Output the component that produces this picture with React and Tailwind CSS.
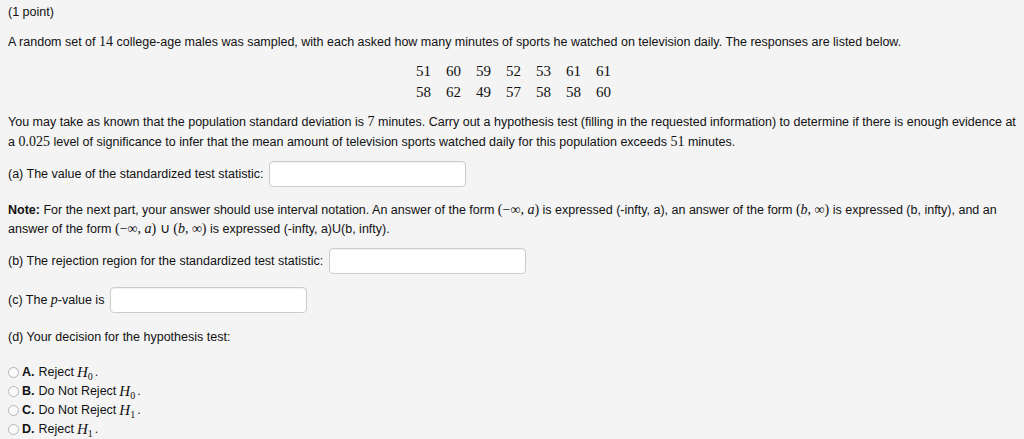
// App.jsx
const serif = "font-['Liberation_Serif',serif]";

function M({ children, italic }) {
  return (
    <span className={`${serif} text-[14px] leading-none ${italic ? "italic" : ""}`}>{children}</span>
  );
}

function AnswerBox() {
  return (
    <input
      type="text"
      className="ml-[6px] h-[26px] w-[197px] rounded-[4px] border border-[#cccccc] bg-white shadow-[inset_0_1px_1px_rgba(0,0,0,0.06)] outline-none"
    />
  );
}

function Radio({ letter, text, sub }) {
  return (
    <label className="flex h-[19px] items-center">
      <span className="mr-[3px] inline-block h-[11px] w-[11px] rounded-full border border-[#b5b5b5] bg-[#fafafa]" />
      <b className="font-bold">{letter}.</b>
      <span className="ml-[4px]">{text}</span>
      <span className="ml-[3px] leading-none">
        <span className={`${serif} text-[15px] italic`}>H</span>
        <sub className={`${serif} text-[10px]`}>{sub}</sub>
      </span>
      <span className="ml-[2px]">.</span>
    </label>
  );
}

const rows = [
  [51, 60, 59, 52, 53, 61, 61],
  [58, 62, 49, 57, 58, 58, 60],
];

export default function App() {
  return (
    <div className="min-h-[439px] bg-[#f4f4f4] px-[8px] pt-[3px] font-['Liberation_Sans',Arial,sans-serif] text-[12.5px] leading-[19px] text-[#111]">
      <p>(1 point)</p>

      <p className="mt-[11px]">
        A random set of <M>14</M> college-age males was sampled, with each asked how many minutes of sports he watched on television daily. The responses are listed below.
      </p>

      {/* data table */}
      <div className="mt-[9px] flex justify-center pl-[3px]">
        <div className="flex flex-col">
          {rows.map((r, i) => (
            <div key={i} className={`flex h-[21px] items-center gap-[15px] ${serif} text-[15px]`}>
              {r.map((v, j) => (
                <span key={j}>{v}</span>
              ))}
            </div>
          ))}
        </div>
      </div>

      <p className="mt-[10px] leading-[19.5px]">
        You may take as known that the population standard deviation is <M>7</M> minutes. Carry out a hypothesis test (filling in the requested information) to determine if there is enough evidence at a <M>0.025</M> level of significance to infer that the mean amount of television sports watched daily for this population exceeds <M>51</M> minutes.
      </p>

      <div className="mt-[9px] flex items-center">
        <span>(a) The value of the standardized test statistic:</span>
        <AnswerBox />
      </div>

      <p className="mt-[14px]">
        <b>Note:</b> For the next part, your answer should use interval notation. An answer of the form{" "}
        <M>(−∞, <i>a</i>)</M> is expressed (-infty, a), an answer of the form <M>(<i>b</i>, ∞)</M> is expressed (b, infty), and an answer of the form <M>(−∞, <i>a</i>) ∪ (<i>b</i>, ∞)</M> is expressed (-infty, a)U(b, infty).
      </p>

      <div className="mt-[9px] flex items-center">
        <span>(b) The rejection region for the standardized test statistic:</span>
        <AnswerBox />
      </div>

      <div className="mt-[13px] flex items-center">
        <span>
          (c) The <M italic>p</M>-value is
        </span>
        <AnswerBox />
      </div>

      <p className="mt-[15px]">(d) Your decision for the hypothesis test:</p>

      <div className="mt-[16px] flex flex-col">
        <Radio letter="A" text="Reject" sub="0" />
        <Radio letter="B" text="Do Not Reject" sub="0" />
        <Radio letter="C" text="Do Not Reject" sub="1" />
        <Radio letter="D" text="Reject" sub="1" />
      </div>
    </div>
  );
}
